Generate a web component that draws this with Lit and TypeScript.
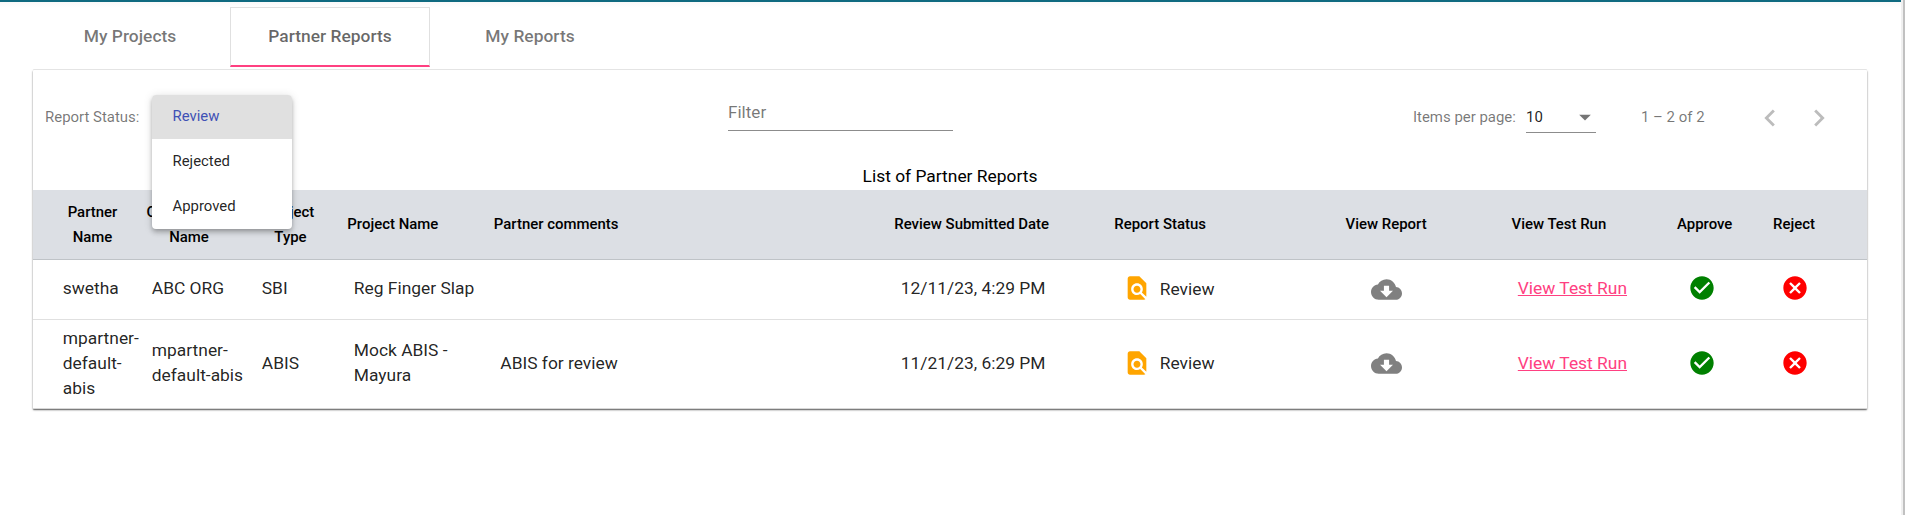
import { LitElement, html, css, svg } from "lit";
import { customElement, property, state } from "lit/decorators.js";
import { classMap } from "lit/directives/class-map.js";

const ICONS: Record<string, string> = {
  find: "M20 19.59V8l-6-6H6c-1.1 0-1.99.9-1.99 2L4 20c0 1.1.89 2 1.99 2H18c.45 0 .85-.15 1.19-.4l-4.43-4.43c-.8.52-1.74.83-2.76.83-2.76 0-5-2.24-5-5s2.24-5 5-5 5 2.24 5 5c0 1.02-.31 1.96-.83 2.75L20 19.59zM9 13c0 1.66 1.34 3 3 3s3-1.34 3-3-1.34-3-3-3-3 1.34-3 3z",
  cloud: "M19.35 10.04C18.67 6.59 15.64 4 12 4 9.11 4 6.6 5.64 5.35 8.04 2.34 8.36 0 10.91 0 14c0 3.31 2.69 6 6 6h13c2.76 0 5-2.24 5-5 0-2.64-2.05-4.78-4.65-4.96zM17 13l-5 5-5-5h3V9h4v4h3z",
  check: "M12 2C6.48 2 2 6.48 2 12s4.48 10 10 10 10-4.48 10-10S17.52 2 12 2zm-2 15l-5-5 1.41-1.41L10 14.17l7.59-7.59L19 8l-9 9z",
  cancel: "M12 2C6.47 2 2 6.47 2 12s4.47 10 10 10 10-4.47 10-10S17.53 2 12 2zm5 13.59L15.59 17 12 13.41 8.41 17 7 15.59 10.59 12 7 8.41 8.41 7 12 10.59 15.59 7 17 8.41 13.41 12 17 15.59z",
  prev: "M15.41 7.41L14 6l-6 6 6 6 1.41-1.41L10.83 12z",
  next: "M10 6L8.59 7.41 13.17 12l-4.58 4.59L10 18l6-6z",
  down: "M7 10l5 5 5-5z",
};

@customElement("md-icon")
class MdIcon extends LitElement {
  static styles = css`
    :host { display: block; flex: none; width: 28px; height: 28px; }
    svg { display: block; width: 100%; height: 100%; fill: currentColor; }
  `;
  @property() name = "";
  render() {
    return html`<svg viewBox="0 0 24 24">${svg`<path d=${ICONS[this.name]}></path>`}</svg>`;
  }
}

@customElement("status-select")
class StatusSelect extends LitElement {
  static styles = css`
    :host { display: block; width: 140px; height: 44px; position: relative; }
    .panel {
      position: absolute; left: 0; top: -0.4px; z-index: 2; width: 140px;
      box-sizing: border-box; background: #fff; border-radius: 4px; overflow: hidden;
      box-shadow: 0 2px 4px -1px rgba(0,0,0,.2), 0 4px 5px rgba(0,0,0,.14), 0 1px 10px rgba(0,0,0,.12);
    }
    .option { height: 44.8px; line-height: 44.8px; padding: 0 20.5px; color: rgba(0,0,0,.87); font-size: 14.9px; }
    .selected { background: #e0e0e0; color: #3f51b5; line-height: 43px; }
  `;
  @state() value = "Review";
  render() {
    return html`<div class="panel" role="listbox">
      ${["Review", "Rejected", "Approved"].map(
        (o) => html`<div class=${classMap({ option: true, selected: o === this.value })} role="option" @click=${() => (this.value = o)}>${o}</div>`
      )}
    </div>`;
  }
}

const HEADERS = ["Partner Name", "Organization Name", "Project Type", "Project Name", "Partner comments",
  "Review Submitted Date", "Report Status", "View Report", "View Test Run", "Approve", "Reject"];
const ROWS = [
  ["swetha", "ABC ORG", "SBI", "Reg Finger Slap", "", "12/11/23, 4:29 PM"],
  ["mpartner-default-abis", "mpartner-default-abis", "ABIS", "Mock ABIS - Mayura", "ABIS for review", "11/21/23, 6:29 PM"],
];

@customElement("app-root")
class AppRoot extends LitElement {
  static styles = css`
    :host { display: flex; height: 515px; overflow: hidden; font-family: Roboto, sans-serif; font-size: 17.4px; line-height: 25px; color: rgba(0,0,0,.87); background: #fff; }
    .page { width: 1901px; box-sizing: border-box; border-top: 2px solid #0f6a80; background: linear-gradient(#f9f9f9, #fff 6px); }
    .scroll { flex: 1; box-sizing: border-box; border-left: 2px solid #f0f0f0; background: #c1c1c1; }
    .tabs { display: flex; height: 60px; margin: 5px 0 3px 30px; }
    .tab { width: 200px; height: 60px; box-sizing: border-box; text-align: center; line-height: 58px; font-weight: 500; color: rgba(0,0,0,.54); }
    .tab.active { line-height: 56px; color: rgba(0,0,0,.6); border: 1px solid #e0e0e0; border-bottom: 2px solid #ff4081; background: #fff; }
    .card { width: 1834px; margin-left: 33px; background: #fff; border-radius: 1px;
      box-shadow: 0 -1px 0 #e4e4e4, 0 1px 2px rgba(0,0,0,.5), 0 1px 1px rgba(0,0,0,.25); }
    .bar { display: flex; height: 93px; box-sizing: border-box; padding: 25px 31px 0 12px; font-size: 14.95px; color: rgba(0,0,0,.54); }
    .label { width: 107px; line-height: 44px; white-space: nowrap; }
    .filter { width: 225px; height: 36px; box-sizing: border-box; margin-left: 436px; border-bottom: 1px solid rgba(0,0,0,.45); font-size: 17.1px; line-height: 34px; }
    .pager { display: flex; margin-left: auto; line-height: 45px; white-space: nowrap; }
    .per { width: 113px; }
    .size { display: flex; justify-content: space-between; width: 70px; height: 38px; box-sizing: border-box; border-bottom: 1px solid rgba(0,0,0,.45); color: rgba(0,0,0,.87); }
    .size md-icon { color: rgba(0,0,0,.54); margin: 8px -3px 0 0; }
    .range { width: 64px; margin-left: 45px; }
    .nav { display: flex; gap: 15px; margin: 5.5px 0 0 48px; color: #bcbcbc; }
    .nav md-icon { width: 34px; height: 34px; }
    .caption { height: 27px; line-height: 26px; text-align: center; color: #000; }
    .row { display: grid; align-items: center; box-sizing: border-box; border-bottom: 1px solid #e0e0e0; padding-left: 29.8px;
      grid-template-columns: 89px 110px 92px 146.5px 400.5px 227px 243px 147px 173px 92px 1fr; }
    .r0 { height: 60px; padding-bottom: 3px; }
    .r1 { height: 89px; padding-bottom: 2px; border-bottom-color: #d8d8d8; }
    .head { height: 70px; padding-left: 25px; background: #dcdfe4; border-bottom-color: #bfc3c7; color: #000; font-size: 14.95px; font-weight: 500;
      grid-template-columns: 84px 93px 112.3px 146.5px 400.5px 220px 231.2px 166px 165.5px 96px 1fr; }
    .head > span { justify-self: start; white-space: nowrap; }
    .head > .wrap { white-space: pre-line; text-align: center; width: 69px; }
    .head > .w1 { width: 86px; margin-left: 4px; }
    .head > .w2 { margin-left: 29px; width: 53px; }
    .c0 { width: 80px; }
    .c1 { width: 100px; }
    .c3 { width: 125px; }
    .status { display: flex; align-items: center; gap: 9px; margin-left: -5px; }
    .status md-icon { color: #ffa500; }
    md-icon { margin-top: 0; }
    .r0 .status span { margin-top: 2px; }
    .cloud { width: 31px; height: 31px; color: #808080; margin-top: 2px; }
    .link { color: #ff4081; text-decoration: underline; }
    .ok { color: #008000; margin-left: -3px; }
    .no { color: #f00; margin-left: -2px; }
    .r1 md-icon { margin-top: -1px; }
    .r1 .cloud { margin-top: 1px; }
  `;
  render() {
    return html`
      <div class="page">
        <nav class="tabs">
          ${["My Projects", "Partner Reports", "My Reports"].map((t) => html`<div class=${classMap({ tab: true, active: t === "Partner Reports" })}>${t}</div>`)}
        </nav>
        <section class="card">
          <div class="bar">
            <span class="label">Report Status:</span>
            <status-select></status-select>
            <div class="filter">Filter</div>
            <div class="pager">
              <span class="per">Items per page:</span>
              <div class="size"><span>10</span><md-icon name="down"></md-icon></div>
              <span class="range">1 – 2 of 2</span>
              <div class="nav"><md-icon name="prev"></md-icon><md-icon name="next"></md-icon></div>
            </div>
          </div>
          <div class="caption">List of Partner Reports</div>
          <div class="row head">
            ${HEADERS.map((h, i) => html`<span class=${classMap({ wrap: i < 3, ["w" + i]: true })}>${i < 3 ? h.replace(" ", "\n") : h}</span>`)}
          </div>
          ${ROWS.map((r, i) => html`<div class="row r${i}">
            ${r.map((c, j) => html`<span class="c${j}">${c}</span>`)}
            <div class="status"><md-icon name="find"></md-icon><span>Review</span></div>
            <md-icon class="cloud" name="cloud"></md-icon>
            <span><a class="link">View Test Run</a></span>
            <md-icon class="ok" name="check"></md-icon>
            <md-icon class="no" name="cancel"></md-icon>
          </div>`)}
        </section>
      </div>
      <div class="scroll"></div>
    `;
  }
}
